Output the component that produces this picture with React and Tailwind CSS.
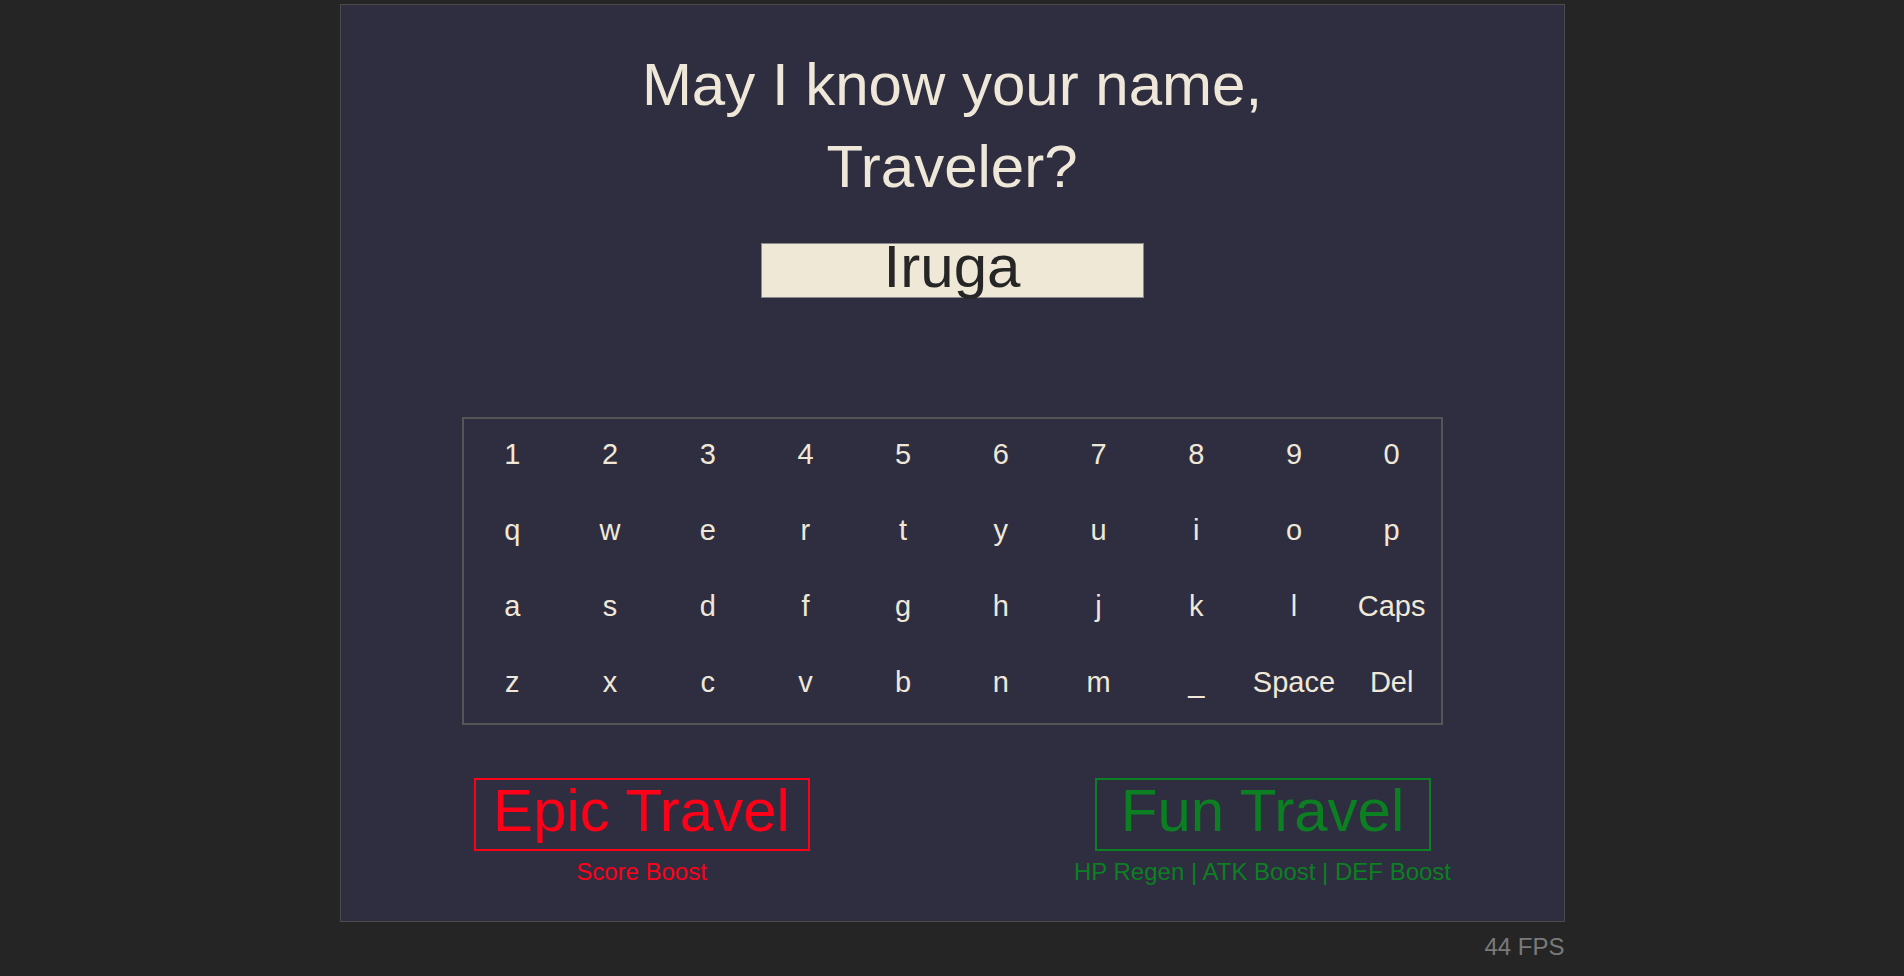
import React, { useState } from 'react';

const rows = [
  ['1', '2', '3', '4', '5', '6', '7', '8', '9', '0'],
  ['q', 'w', 'e', 'r', 't', 'y', 'u', 'i', 'o', 'p'],
  ['a', 's', 'd', 'f', 'g', 'h', 'j', 'k', 'l', 'Caps'],
  ['z', 'x', 'c', 'v', 'b', 'n', 'm', '_', 'Space', 'Del'],
];

const Keyboard = ({ onKey }) => (
  <div className="mx-auto grid w-[981px] grid-cols-10 border-2 border-[#555555]">
    {rows.flat().map((k) => (
      <button
        key={k}
        onClick={() => onKey(k)}
        className="flex h-[76px] items-center justify-center pb-1 text-[29px] text-[#efe8d8]"
      >
        {k}
      </button>
    ))}
  </div>
);

const TravelOption = ({ title, desc, color, border }) => (
  <div className="flex w-[360px] flex-col items-center">
    <div className={`w-[336px] border-2 ${border} pb-[7px] text-center text-[60px] leading-[62px] ${color}`}>
      {title}
    </div>
    <p className={`mt-[5px] whitespace-nowrap text-[24px] leading-[32px] ${color}`}>{desc}</p>
  </div>
);

function App() {
  const [name, setName] = useState('Iruga');

  const handleKey = (k) => {
    if (k === 'Del') setName((n) => n.slice(0, -1));
    else if (k === 'Space') setName((n) => n + ' ');
    else if (k !== 'Caps') setName((n) => n + k);
  };

  return (
    <div className="min-h-screen bg-[#252525] pt-1 font-['Liberation_Sans',Arial,sans-serif]">
      <div className="mx-auto flex h-[918px] w-[1225px] flex-col border border-[#4b4b4b] bg-[#2f2e40] pt-[39px]">
        <h1 className="text-center text-[60px] leading-[82px] text-[#efe8d8]">
          May I know your name,
          <br />
          Traveler?
        </h1>

        <div className="mx-auto mt-[35px] h-[55px] w-[383px] overflow-visible border border-[#8a8a8a] bg-[#efe8d6] text-center text-[60px] leading-[46px] text-[#262626]">
          {name}
        </div>

        <div className="mt-[119px]">
          <Keyboard onKey={handleKey} />
        </div>

        <div className="mx-auto mt-[53px] flex w-[981px] justify-between">
          <TravelOption title="Epic Travel" desc="Score Boost" color="text-[#ff0019]" border="border-[#ff0019]" />
          <TravelOption
            title="Fun Travel"
            desc="HP Regen | ATK Boost | DEF Boost"
            color="text-[#0b7f22]"
            border="border-[#0b7f22]"
          />
        </div>
      </div>
      <div className="mx-auto mt-[11px] w-[1225px] text-right text-[24px] leading-[28px] text-[#7a7a7a]">
        44 FPS
      </div>
    </div>
  );
}

export default App;
